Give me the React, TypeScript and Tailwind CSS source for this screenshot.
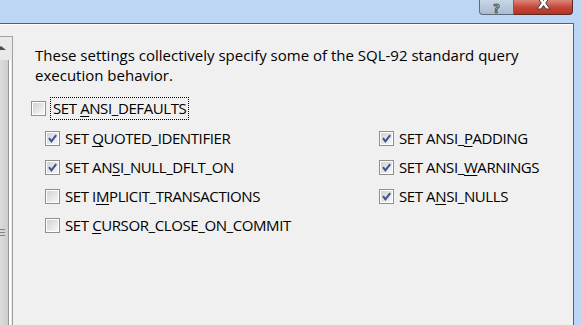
import React from 'react'

type Opt = { pre: string; key: string; post: string; checked: boolean }

const leftOpts: Opt[] = [
    { pre: 'SET ', key: 'Q', post: 'UOTED_IDENTIFIER', checked: true },
    { pre: 'SET AN', key: 'S', post: 'I_NULL_DFLT_ON', checked: true },
    { pre: 'SET I', key: 'M', post: 'PLICIT_TRANSACTIONS', checked: false },
    { pre: 'SET ', key: 'C', post: 'URSOR_CLOSE_ON_COMMIT', checked: false },
]

const rightOpts: Opt[] = [
    { pre: 'SET ANSI_', key: 'P', post: 'ADDING', checked: true },
    { pre: 'SET ANSI_', key: 'W', post: 'ARNINGS', checked: true },
    { pre: 'SET A', key: 'N', post: 'SI_NULLS', checked: true },
]

const CheckBox: React.FC<{ checked: boolean }> = ({ checked }) => (
    <div className="w-[15px] h-[15px] shrink-0 border border-[#8e8f8f] bg-white p-px">
        <div className="relative w-full h-full bg-gradient-to-br from-[#d2d2d2] to-[#f7f7f7]">
            {checked && (
                <svg className="absolute inset-0" width="11" height="11" viewBox="0 0 11 11">
                    <path d="M2 5.2 L4.4 8.3 L9.2 2.2" fill="none" stroke="#3d5095" strokeWidth="2" />
                </svg>
            )}
        </div>
    </div>
)

const Label: React.FC<{ opt: Opt }> = ({ opt }) => (
    <span className="whitespace-nowrap tracking-[-0.4px]">
        {opt.pre}
        <span className="underline underline-offset-2">{opt.key}</span>
        {opt.post}
    </span>
)

const Row: React.FC<{ opt: Opt }> = ({ opt }) => (
    <div className="flex items-center gap-[5px] h-[29px]">
        <CheckBox checked={opt.checked} />
        <Label opt={opt} />
    </div>
)

const App: React.FC = () => {
    return (
        <div className="w-[581px] h-[325px] overflow-hidden flex flex-col bg-[#bcd6f3] text-black font-['Open_Sans',sans-serif]">
            {/* Caption buttons */}
            <div className="h-[23px] shrink-0 flex justify-end pr-[8px]">
                <div className="flex h-[15px]">
                    <div className="w-[35px] h-full flex justify-center items-start rounded-bl-[4px] border border-t-0 border-[#5d6b7c] bg-gradient-to-b from-[#c9d6e6] to-[#a9bcd3]">
                        <span
                            className="mt-[3px] text-[12px] font-bold leading-[11px] text-white"
                            style={{ WebkitTextStroke: '1px #4a5360' }}
                        >
                            ?
                        </span>
                    </div>
                    <div className="relative w-[59px] h-full overflow-hidden rounded-br-[4px] border border-t-0 border-l-0 border-[#5b2a22] bg-gradient-to-b from-[#d98878] via-[#c8473a] to-[#b43322]">
                        <svg className="absolute left-[22px] -top-[4px]" width="15" height="14" viewBox="0 0 15 14">
                            <path
                                d="M1 1 H5 L7.5 4.5 L10 1 H14 L9.7 7 L14 13 H10 L7.5 9.5 L5 13 H1 L5.3 7 Z"
                                fill="#ffffff"
                                stroke="#4a3a38"
                                strokeWidth="1"
                            />
                        </svg>
                    </div>
                </div>
            </div>

            {/* Client area */}
            <div className="flex-1 flex mr-[7px] border-t border-r border-[#58626f] bg-[#f0f0f0]">
                {/* Tree panel edge with scrollbar */}
                <div className="w-[13px] shrink-0 flex flex-col border-t border-white">
                    <div className="h-[11px] shrink-0" />
                    <div className="flex-1 flex flex-col border-t border-r border-[#a0a0a0] bg-[#e9e9e9]">
                        <div className="h-[23px] shrink-0 relative">
                            <div className="absolute -left-[4px] top-[9px] w-0 h-0 border-l-[5px] border-r-[5px] border-b-[4px] border-l-transparent border-r-transparent border-b-[#4d4d4d]" />
                        </div>
                        <div className="flex-1 flex">
                            <div className="w-[9px] flex flex-col items-start justify-start bg-gradient-to-r from-[#dcdcdc] to-[#cdcdcd] border-r border-[#979797]">
                                <div className="mt-[169px] flex flex-col gap-[2px]">
                                    <div className="w-[5px] h-px bg-[#808080]" />
                                    <div className="w-[5px] h-px bg-[#808080]" />
                                    <div className="w-[5px] h-px bg-[#808080]" />
                                </div>
                            </div>
                            <div className="w-[2px] bg-white" />
                        </div>
                    </div>
                </div>

                {/* Page */}
                <div className="flex-1 pl-[18px] pt-[20px] text-[15px] border-t border-white">
                    <p className="ml-[4px] leading-[20px] whitespace-nowrap">
                        These settings collectively specify some of the SQL-92 standard query
                        <br />
                        execution behavior.
                    </p>

                    <div className="mt-[12px] flex items-center gap-[4px] h-[23px]">
                        <CheckBox checked={false} />
                        <div className="h-[23px] flex items-center px-[2px] border border-dotted border-black">
                            <Label opt={{ pre: 'SET ', key: 'A', post: 'NSI_DEFAULTS', checked: false }} />
                        </div>
                    </div>

                    <div className="mt-[4px] pl-[14px] grid grid-cols-[334px_1fr]">
                        <div className="flex flex-col">
                            {leftOpts.map((o) => (
                                <Row key={o.post} opt={o} />
                            ))}
                        </div>
                        <div className="flex flex-col">
                            {rightOpts.map((o) => (
                                <Row key={o.post} opt={o} />
                            ))}
                        </div>
                    </div>
                </div>
            </div>
        </div>
    )
}

export default App
